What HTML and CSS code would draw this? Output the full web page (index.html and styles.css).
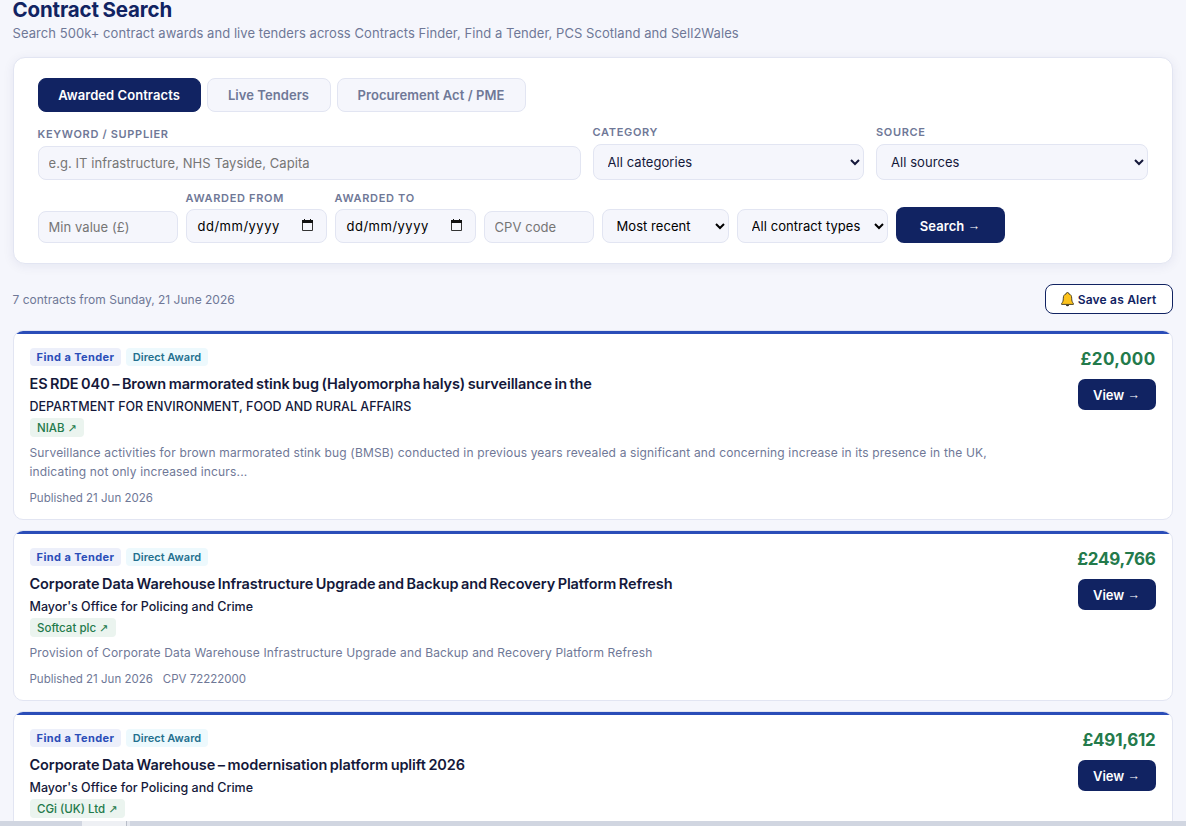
FILE: index.html
```html
<!DOCTYPE html>
<html lang="en">
<head>
  <meta charset="UTF-8">
  <title>Contract Search</title>
  <meta name="viewport" content="width=device-width, initial-scale=1.0">
  <link rel="stylesheet" href="styles.css">
</head>
<body>
  <main class="page">
    <h1>Contract Search</h1>
    <p class="subtitle">Search 500k+ contract awards and live tenders across Contracts Finder, Find a Tender, PCS Scotland and Sell2Wales</p>

    <form class="search-card">
      <div class="tabs">
        <button type="button" class="tab active">Awarded Contracts</button>
        <button type="button" class="tab tab-live">Live Tenders</button>
        <button type="button" class="tab tab-pme">Procurement Act / PME</button>
      </div>

      <div class="row-main">
        <div class="field">
          <label>Keyword / Supplier</label>
          <input type="text" placeholder="e.g. IT infrastructure, NHS Tayside, Capita">
        </div>
        <div class="field">
          <label>Category</label>
          <select><option>All categories</option></select>
        </div>
        <div class="field">
          <label>Source</label>
          <select><option>All sources</option></select>
        </div>
      </div>

      <div class="row-filters">
        <input class="min-value" type="text" placeholder="Min value (£)">
        <div class="field">
          <label>Awarded from</label>
          <div class="date">
            <span>dd/mm/yyyy</span>
            <svg width="11" height="12" viewBox="0 0 11 12"><path d="M.5 2.500h10v9H.5z" fill="none" stroke="#333"/><path d="M0 1h11v3H0zM2 0h1v1H2zM8 0h1v1H8z" fill="#111"/></svg>
          </div>
        </div>
        <div class="field">
          <label>Awarded to</label>
          <div class="date">
            <span>dd/mm/yyyy</span>
            <svg width="11" height="12" viewBox="0 0 11 12"><path d="M.5 2.500h10v9H.5z" fill="none" stroke="#333"/><path d="M0 1h11v3H0zM2 0h1v1H2zM8 0h1v1H8z" fill="#111"/></svg>
          </div>
        </div>
        <input class="cpv" type="text" placeholder="CPV code">
        <select class="sort"><option>Most recent</option></select>
        <select class="types"><option>All contract types</option></select>
        <button type="button" class="btn-search">Search <span class="arrow">→</span></button>
      </div>
    </form>

    <div class="results-bar">
      <span>7 contracts from Sunday, 21 June 2026</span>
      <button type="button" class="btn-alert">
        <svg width="13" height="15" viewBox="0 0 13 15"><path d="M5.2 1.8a1.3 1.3 0 0 1 2.6 0c2 .6 2.9 2.200 2.900 4.400 0 2.800.6 4 1.700 5.300v.9H.6v-.9C1.700 10.200 2.300 9 2.300 6.200c0-2.200.9-3.800 2.900-4.400z" fill="#fcc21b" stroke="#3b3420" stroke-width=".9"/><path d="M4.900 12.700h3.200a1.600 1.600 0 0 1-3.200 0z" fill="#3b3420"/></svg>
        Save as Alert
      </button>
    </div>

    <div class="results">
      <article class="card">
        <div class="card-body">
          <div class="badges"><span class="badge">Find a Tender</span><span class="badge direct">Direct Award</span></div>
          <h2>ES RDE 040 – Brown marmorated stink bug (Halyomorpha halys) surveillance in the</h2>
          <div class="buyer">DEPARTMENT FOR ENVIRONMENT, FOOD AND RURAL AFFAIRS</div>
          <a class="supplier">NIAB <i>↗</i></a>
          <p class="desc">Surveillance activities for brown marmorated stink bug (BMSB) conducted in previous years revealed a significant and concerning increase in its presence in the UK, indicating not only increased incurs...</p>
          <div class="meta"><span>Published 21 Jun 2026</span></div>
        </div>
        <div class="card-side">
          <div class="price short">£20,000</div>
          <a class="btn-view">View <span class="arrow">→</span></a>
        </div>
      </article>

      <article class="card">
        <div class="card-body">
          <div class="badges"><span class="badge">Find a Tender</span><span class="badge direct">Direct Award</span></div>
          <h2>Corporate Data Warehouse Infrastructure Upgrade and Backup and Recovery Platform Refresh</h2>
          <div class="buyer">Mayor's Office for Policing and Crime</div>
          <a class="supplier">Softcat plc <i>↗</i></a>
          <p class="desc">Provision of Corporate Data Warehouse Infrastructure Upgrade and Backup and Recovery Platform Refresh</p>
          <div class="meta"><span>Published 21 Jun 2026</span><span>CPV 72222000</span></div>
        </div>
        <div class="card-side">
          <div class="price">£249,766</div>
          <a class="btn-view">View <span class="arrow">→</span></a>
        </div>
      </article>

      <article class="card">
        <div class="card-body">
          <div class="badges"><span class="badge">Find a Tender</span><span class="badge direct">Direct Award</span></div>
          <h2>Corporate Data Warehouse – modernisation platform uplift 2026</h2>
          <div class="buyer">Mayor's Office for Policing and Crime</div>
          <a class="supplier">CGi (UK) Ltd <i>↗</i></a>
        </div>
        <div class="card-side">
          <div class="price">£491,612</div>
          <a class="btn-view">View <span class="arrow">→</span></a>
        </div>
      </article>
    </div>
  </main>
  <div class="bottom-strip"></div>
</body>
</html>
```
FILE: styles.css
```css
:root {
  --navy: #112362;
  --blue: #2a4db8;
  --green: #237a4b;
  --ink: #14183a;
  --muted: #6f7897;
  --line: #e2e5f2;
  --bg: #f5f6fc;
}

* { box-sizing: border-box; margin: 0; padding: 0; }

body {
  font-family: Inter, "Liberation Sans", sans-serif;
  font-size: 13px;
  background: var(--bg);
  color: var(--ink);
  height: 826px;
  overflow: hidden;
}

.page { width: 1160px; margin-left: 12.5px; }

h1 {
  font-size: 20.5px;
  line-height: 20px;
  font-weight: 700;
  letter-spacing: -0.15px;
  word-spacing: -1px;
  color: var(--navy);
}

.subtitle {
  line-height: 20px;
  margin-top: 3px;
  letter-spacing: 0.055px;
  color: var(--muted);
}

/* search form */
.search-card {
  height: 207px;
  margin-top: 14px;
  padding: 20px 24px;
  background: #fff;
  border: 1px solid var(--line);
  border-radius: 12px;
  box-shadow: 0 2px 12px rgba(17, 35, 98, 0.07);
}

button, input, select {
  font-family: inherit;
  font-size: 13px;
  letter-spacing: 0.06px;
}

.tabs { display: flex; gap: 6px; }

.tab {
  width: 163px;
  height: 34px;
  border: 1px solid var(--line);
  border-radius: 8px;
  background: var(--bg);
  color: var(--muted);
  font-weight: 600;
}
.tab.active { background: var(--navy); border-color: var(--navy); color: #fff; }
.tab-live { width: 124px; }
.tab-pme { width: 189px; }

.row-main {
  display: grid;
  grid-template-columns: 2fr 1fr 1fr;
  gap: 12px;
  align-items: end;
  height: 56px;
  margin-top: 12px;
}

.field { display: flex; flex-direction: column; }

label {
  font-size: 11px;
  line-height: 14px;
  font-weight: 600;
  letter-spacing: 0.67px;
  text-transform: uppercase;
  color: var(--muted);
  margin-bottom: 5px;
}

input, select, .date {
  border: 1px solid var(--line);
  border-radius: 8px;
  background: var(--bg);
}
input { height: 34px; padding: 0 10px; }
input::placeholder { color: #757575; }
select { height: 36px; padding: 0 0 0 10px; color: var(--ink); }

.row-filters {
  display: flex;
  align-items: flex-end;
  gap: 8px;
  height: 63px;
}
.row-filters input { height: 32px; }
.row-filters select { height: 34px; color: #000; }
.row-filters label { margin-bottom: 4px; }

.min-value { width: 140px; }
.cpv { width: 110px; }
.sort { width: 127px; }
.types { width: 151px; }

.date {
  display: flex;
  justify-content: space-between;
  width: 141px;
  height: 34px;
  padding: 8px 12.5px 0 11px;
  line-height: 17px;
  color: #000;
}
.date span { letter-spacing: 0.5px; }
.date svg { margin-top: 1px; }

.btn-search {
  width: 109px;
  height: 36px;
  padding-top: 1px;
  border: 0;
  border-radius: 8px;
  background: var(--navy);
  color: #fff;
  font-weight: 600;
}

.arrow {
  font-family: "Liberation Sans", sans-serif;
  font-size: 12.5px;
  font-weight: 400;
  line-height: 1;
  vertical-align: 1px;
}

.results-bar {
  display: flex;
  justify-content: space-between;
  align-items: center;
  margin-top: 20px;
  height: 30px;
  font-size: 12px;
  color: var(--muted);
}

.btn-alert {
  display: flex;
  align-items: center;
  justify-content: center;
  gap: 4px;
  width: 128px;
  height: 30px;
  border: 1px solid var(--navy);
  border-radius: 8px;
  background: #fff;
  color: var(--navy);
  font-size: 12px;
  font-weight: 600;
  letter-spacing: 0.2px;
}

/* results */
.results {
  display: flex;
  flex-direction: column;
  gap: 10px;
  margin-top: 16px;
}

.card {
  position: relative;
  display: flex;
  justify-content: space-between;
  padding: 17px 16px 13px;
  background: #fff;
  border: 1px solid var(--line);
  border-radius: 10px;
  overflow: hidden;
}
.card::before {
  content: "";
  position: absolute;
  top: 0;
  left: 0;
  right: 0;
  height: 3px;
  background: var(--blue);
}

.card-body { width: 976px; }

.badges { display: flex; gap: 5px; }
.badge {
  width: 91px;
  height: 18px;
  padding-left: 1px;
  border-radius: 4px;
  background: #eceffa;
  color: var(--blue);
  font-size: 11px;
  line-height: 18px;
  font-weight: 700;
  letter-spacing: 0.4px;
  text-align: center;
}
.badge.direct {
  width: 82px;
  background: #edf9fd;
  color: #23708f;
  font-weight: 600;
  letter-spacing: 0;
}

h2 {
  margin-top: 8px;
  font-size: 14.5px;
  line-height: 20px;
  font-weight: 600;
  letter-spacing: -0.09px;
  word-spacing: -1px;
  white-space: nowrap;
}

.buyer {
  margin-top: 3px;
  font-size: 12.5px;
  line-height: 19px;
  font-weight: 500;
}

.supplier {
  display: block;
  width: fit-content;
  height: 19px;
  margin-top: 2px;
  padding: 0 7.5px;
  border-radius: 4px;
  background: #ebf4ef;
  color: var(--green);
  font-size: 11.5px;
  line-height: 20px;
  font-weight: 500;
}
.supplier i {
  font-family: "DejaVu Sans", sans-serif;
  font-style: normal;
  font-weight: 400;
  font-size: 11px;
  line-height: 1;
}

.desc {
  margin-top: 6px;
  font-size: 12px;
  line-height: 19px;
  letter-spacing: 0.155px;
  color: var(--muted);
}

.meta {
  display: flex;
  gap: 10px;
  margin-top: 9px;
  font-size: 11.5px;
  line-height: 16px;
  color: var(--muted);
}

.card-side {
  display: flex;
  flex-direction: column;
  align-items: flex-end;
}
.price {
  font-size: 17px;
  line-height: 22px;
  font-weight: 700;
  letter-spacing: -0.25px;
  color: var(--green);
}
.price.short { letter-spacing: 0.4px; }
.btn-view {
  width: 78px;
  height: 31px;
  margin-top: 9px;
  border-radius: 7px;
  background: var(--navy);
  color: #fff;
  font-weight: 600;
  line-height: 32px;
  text-align: center;
}

.bottom-strip {
  position: fixed;
  left: 0;
  right: 0;
  bottom: 0;
  height: 5px;
  background: linear-gradient(90deg, transparent 82px, #eef0f4 82px, #eef0f4 126px, #b9bec9 126px, #b9bec9 127px, #e4e7ee 127px, #e4e7ee 130px, transparent 130px) #d1d6e1;
}
```
